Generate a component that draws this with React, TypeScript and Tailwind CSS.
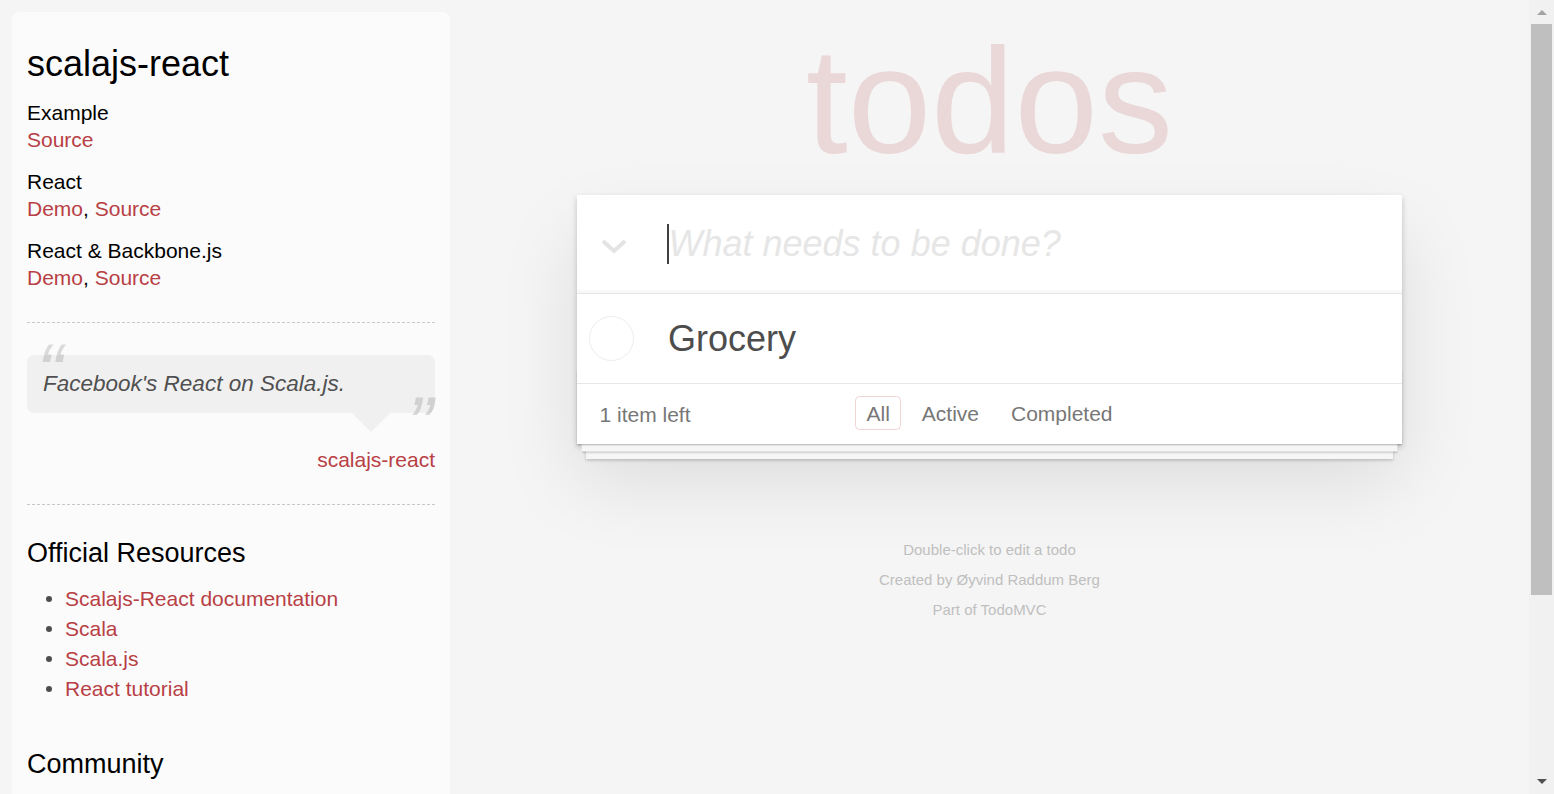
import React from "react";

const Link = ({ children }: { children: React.ReactNode }) => (
    <a className="text-[#b83f45] no-underline cursor-pointer">{children}</a>
);

const SourceGroup = ({ title, demo }: { title: string; demo?: boolean }) => (
    <div className="mt-[15px] text-[21px] leading-[27px] first:mt-[14px]">
        <h5 className="font-normal">{title}</h5>
        <div>
            {demo && (
                <>
                    <Link>Demo</Link>,{" "}
                </>
            )}
            <Link>Source</Link>
        </div>
    </div>
);

const Sidebar = () => {
    const resources = ["Scalajs-React documentation", "Scala", "Scala.js", "React tutorial"];

    return (
        <aside className="w-[450px] shrink-0 pl-[12px] pt-[12px]">
            <div className="min-h-[820px] rounded-[7.5px] bg-[#fbfbfb] px-[15px] pt-[15px] text-black">
                <h3 className="mt-[15px] text-[36px] leading-[43px] font-normal">scalajs-react</h3>
                <div>
                    <SourceGroup title="Example" />
                    <SourceGroup title="React" demo />
                    <SourceGroup title="React & Backbone.js" demo />
                </div>

                <div className="mt-[31px] border-t border-dashed border-[#c8c8c8]" />

                {/* quote bubble */}
                <div className="relative mt-[32px] rounded-[7.5px] bg-[#f0f0f0] px-[16px] py-[15px] text-[22.5px] leading-[28px] italic text-[#505050]">
                    <span className="absolute left-[10px] top-[-21px] text-[78px] leading-[75px] text-black/[0.13]">“</span>
                    Facebook's React on Scala.js.
                    <span className="absolute right-[2px] top-[32px] text-[78px] leading-[75px] text-black/[0.13]">”</span>
                    <div className="absolute right-[45px] top-full h-0 w-0 border-[19.5px] border-transparent border-t-[#f0f0f0]" />
                </div>
                <div className="mt-[33px] text-right text-[21px] leading-[27px]">
                    <Link>scalajs-react</Link>
                </div>

                <div className="mt-[31px] border-t border-dashed border-[#c8c8c8]" />

                <h4 className="mt-[31px] text-[27px] leading-[35px] font-normal">Official Resources</h4>
                <ul className="mt-[13px] text-[21px] leading-[30px]">
                    {resources.map((r) => (
                        <li key={r} className="flex items-center">
                            <span className="ml-[19px] mr-[13px] h-[6px] w-[6px] rounded-full bg-[#4d4d4d]" />
                            <Link>{r}</Link>
                        </li>
                    ))}
                </ul>

                <h4 className="mt-[43px] text-[27px] leading-[35px] font-normal">Community</h4>
            </div>
        </aside>
    );
};

const Filter = ({ label, active }: { label: string; active?: boolean }) => (
    <a
        className={
            active
                ? "mx-[4.5px] h-[34px] rounded-[4.5px] border border-[#efd5d5] px-[10.5px] leading-[33px] text-[#777]"
                : "mx-[4.5px] h-[34px] rounded-[4.5px] border border-transparent px-[10.5px] leading-[33px] text-[#777]"
        }
    >
        {label}
    </a>
);

const TodoApp = () => (
    <main className="flex flex-1 flex-col items-center">
        <h1 className="mt-[26px] text-center text-[150px] font-normal leading-[150px] text-[#ead7d8]">todos</h1>

        <section className="relative mt-[19px] w-[825px] bg-white shadow-[0_3px_6px_rgba(0,0,0,0.2),0_37.5px_75px_rgba(0,0,0,0.1)]">
            {/* new todo */}
            <div className="flex h-[98px] items-center shadow-[inset_0_-3px_1.5px_rgba(0,0,0,0.03)]">
                <div className="flex w-[90px] pl-[24px] pt-[4px]">
                    <svg width="26" height="15" viewBox="0 0 26 15">
                        <path d="M2 2 L13 12 L24 2" fill="none" stroke="#e4e4e4" strokeWidth="4" />
                    </svg>
                </div>
                <span className="h-[40px] w-[1.5px] bg-[#404040]" />
                <span className="text-[36px] italic leading-[40px] text-[#e6e6e6]">What needs to be done?</span>
            </div>

            {/* list */}
            <ul className="border-t border-[#e6e6e6]">
                <li className="flex h-[89px] items-center pl-[12px]">
                    <span className="h-[45px] w-[45px] rounded-full border-[1.5px] border-[#ededed]" />
                    <span className="ml-[34px] text-[36px] leading-[43px] text-[#4d4d4d]">Grocery</span>
                </li>
            </ul>

            {/* footer */}
            <footer className="relative flex h-[61px] items-center border-t border-[#e6e6e6] px-[22.5px] pt-[1px] text-[21px] text-[#777]">
                <div className="pointer-events-none absolute bottom-0 left-0 right-0 h-[75px] shadow-[0_1.5px_1.5px_rgba(0,0,0,0.2),0_12px_0_-4.5px_#f6f6f6,0_13.5px_1.5px_-4.5px_rgba(0,0,0,0.2),0_24px_0_-9px_#f6f6f6,0_25.5px_3px_-9px_rgba(0,0,0,0.2)]" />
                <span className="relative">1 item left</span>
                <div className="absolute left-0 right-0 top-[12px] flex justify-center">
                    <Filter label="All" active />
                    <Filter label="Active" />
                    <Filter label="Completed" />
                </div>
            </footer>
        </section>

        <footer className="mt-[91px] text-center text-[15px] leading-[30px] text-[#bfbfbf]">
            <p>Double-click to edit a todo</p>
            <p>Created by Øyvind Raddum Berg</p>
            <p>Part of TodoMVC</p>
        </footer>
    </main>
);

const Scrollbar = () => (
    <div className="flex w-[25px] shrink-0 flex-col items-center bg-[#f1f1f1]">
        <div className="flex h-[24px] items-center justify-center">
            <svg width="10" height="5" viewBox="0 0 10 5">
                <path d="M0 5 L5 0 L10 5 Z" fill="#a3a3a3" />
            </svg>
        </div>
        <div className="h-[571px] w-[21px] bg-[#bfbfbf]" />
        <div className="flex-1" />
        <div className="flex h-[26px] items-center justify-center">
            <svg width="10" height="5" viewBox="0 0 10 5">
                <path d="M0 0 L10 0 L5 5 Z" fill="#505050" />
            </svg>
        </div>
    </div>
);

export default function App() {
    return (
        <div className="flex h-[794px] overflow-hidden bg-[#f5f5f5] font-['Liberation_Sans',Arial,Helvetica,sans-serif]">
            <Sidebar />
            <TodoApp />
            <Scrollbar />
        </div>
    );
}
